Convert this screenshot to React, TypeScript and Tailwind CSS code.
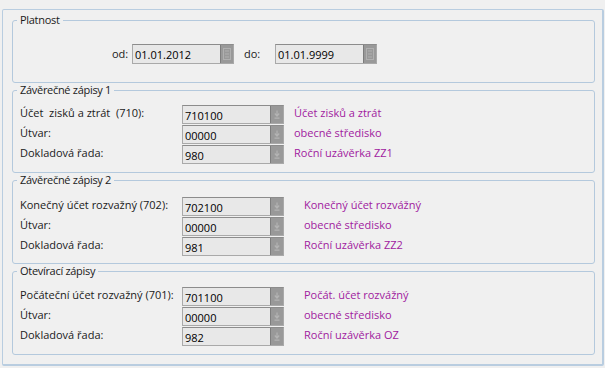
import React from 'react';

type Row = { label: string; value: string; note: string };

const groups: { title: string; noteX: string; top: string; h: string; rows: Row[] }[] = [
  {
    title: 'Závěrečné zápisy 1',
    noteX: 'ml-[10px]',
    top: 'mt-[8px]',
    h: 'h-[90px]',
    rows: [
      { label: 'Účet  zisků a ztrát  (710):', value: '710100', note: 'Účet zisků a ztrát' },
      { label: 'Útvar:', value: '00000', note: 'obecné středisko' },
      { label: 'Dokladová řada:', value: '980', note: 'Roční uzávěrka ZZ1' },
    ],
  },
  {
    title: 'Závěrečné zápisy 2',
    noteX: 'ml-[20px]',
    top: 'mt-[10px]',
    h: 'h-[91px]',
    rows: [
      { label: 'Konečný účet rozvažný (702):', value: '702100', note: 'Konečný účet rozvážný' },
      { label: 'Útvar:', value: '00000', note: 'obecné středisko' },
      { label: 'Dokladová řada:', value: '981', note: 'Roční uzávěrka ZZ2' },
    ],
  },
  {
    title: 'Otevírací zápisy',
    noteX: 'ml-[20px]',
    top: 'mt-[9px]',
    h: 'h-[91px]',
    rows: [
      { label: 'Počáteční účet rozvažný (701):', value: '701100', note: 'Počát. účet rozvážný' },
      { label: 'Útvar:', value: '00000', note: 'obecné středisko' },
      { label: 'Dokladová řada:', value: '982', note: 'Roční uzávěrka OZ' },
    ],
  },
];

// faint glyph drawn on the lookup button
const ArrowGlyph = () => (
  <svg width="6" height="9" viewBox="0 0 6 9" className="text-[#b4b4b4]">
    <path d="M3 0.5v5 M0.8 3.5L3 6 5.2 3.5 M0.5 8.2h5" stroke="currentColor" strokeWidth="1.2" fill="none" />
  </svg>
);

const CalendarGlyph = () => (
  <svg width="8" height="12" viewBox="0 0 8 12" className="text-[#b0b0b0]">
    <rect x="0.5" y="0.5" width="7" height="11" fill="none" stroke="currentColor" />
    <path d="M2 3h4 M2 6h4 M2 9h4" stroke="currentColor" />
  </svg>
);

const LookupField = ({ value, wide, calendar }: { value: string; wide?: boolean; calendar?: boolean }) => (
  <div
    className={`flex ${wide ? 'h-[20px]' : 'h-[19px]'} w-[102px] border border-[#a9a9a9] border-t-[#8c8c8c] bg-[#e8e8e8]`}
  >
    <div className="flex-1 pl-[2px] pt-[2px] text-[11px] leading-[15px] text-black">{value}</div>
    <div className="flex w-[13px] items-center justify-center border-l border-[#7d7d7d] bg-[#999999]">
      {calendar ? <CalendarGlyph /> : <ArrowGlyph />}
    </div>
  </div>
);

const Group = ({ title, children, className }: { title: string; children: React.ReactNode; className?: string }) => (
  <fieldset className={`w-[583px] rounded-[3px] border border-[#b4c9dd] ${className ?? ''}`}>
    <legend className="ml-[4px] px-[3px] text-[11px] leading-[14px] tracking-[-0.3px] text-[#1a1a1a]">{title}</legend>
    {children}
  </fieldset>
);

export default function App() {
  return (
    <div
      className="h-[368px] w-[605px] bg-[#f0f0f0] pt-[9px] pl-[2px]"
      style={{ fontFamily: '"Open Sans", "Noto Sans", sans-serif' }}
    >
      <div className="flex h-[357px] w-[602px] flex-col rounded-[2px] border border-r-2 border-b-2 border-[#b9cde0] pt-[3px] pl-[9px]">
        <Group title="Platnost" className="h-[70px]">
          <div className="mt-[17px] flex items-center text-[11px] text-[#1a1a1a]">
            <span className="ml-[99px] w-[20px]">od:</span>
            <LookupField value="01.01.2012" wide calendar />
            <span className="ml-[10px] w-[31px]">do:</span>
            <LookupField value="01.01.9999" wide calendar />
          </div>
        </Group>
        {groups.map((g) => (
          <Group key={g.title} title={g.title} className={g.h}>
            <div className={`${g.top} flex flex-col gap-[1px]`}>
              {g.rows.map((r) => (
                <div key={r.label + r.value} className="flex h-[19px] items-center text-[11px]">
                  <span className="-mt-[2px] w-[169px] pl-[7px] whitespace-pre text-[#1a1a1a]">{r.label}</span>
                  <LookupField value={r.value} />
                  <span className={`${g.noteX} -mt-[2px] text-[#a0209f]`}>{r.note}</span>
                </div>
              ))}
            </div>
          </Group>
        ))}
      </div>
    </div>
  );
}
